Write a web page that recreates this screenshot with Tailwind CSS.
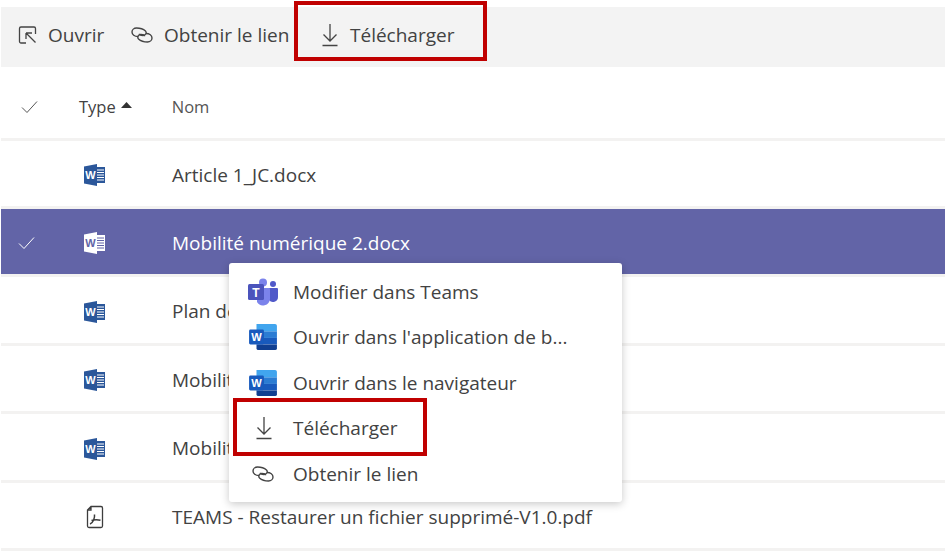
<!DOCTYPE html>
<html lang="fr">
<head>
  <meta charset="UTF-8">
  <title>Fichiers</title>
  <script src="https://cdn.jsdelivr.net/npm/@tailwindcss/browser@4"></script>
</head>
<body class="bg-white">
  <svg class="hidden">
    <symbol id="word" viewBox="0 0 22 22">
      <path d="M12 3h9v16h-9z" fill="#2b579a"/>
      <path d="M13 6h7M13 8.500h7M13 11h7M13 13.500h7M13 16h7" stroke="#fff" stroke-width="1"/>
      <path d="M0 2.500 13 0v22L0 19.500z" fill="#2b579a"/>
      <text x="6.500" y="15" text-anchor="middle" font-family="Liberation Sans" font-weight="700" font-size="11" fill="#fff">W</text>
    </symbol>
    <symbol id="wordsel" viewBox="0 0 22 22">
      <path d="M12 3h9v16h-9z" fill="#fff"/>
      <path d="M13 6h7M13 8.500h7M13 11h7M13 13.500h7M13 16h7" stroke="#6264a7" stroke-width="1"/>
      <path d="M0 2.500 13 0v22L0 19.500z" fill="#fff"/>
      <text x="6.500" y="15" text-anchor="middle" font-family="Liberation Sans" font-weight="700" font-size="11" fill="#6264a7">W</text>
    </symbol>
    <symbol id="dl" viewBox="0 0 20 24">
      <path d="M10 1v17M3.500 11.500l6.500 6.500 6.500-6.500M2.500 22.500h15" fill="none" stroke="#444" stroke-width="1.300"/>
    </symbol>
    <symbol id="lien" viewBox="0 0 22 16">
      <path d="M7 9.500C3.500 9.500 1 7.500 1 5 1 2.800 3 1 5.500 1 9 1 12.500 2.200 14.500 4 16 5.500 15 8.500 12 8.500 10 8.500 8.500 7.800 8.500 6.800" fill="none" stroke="#444" stroke-width="1.400"/>
      <path d="M15 6.500C18.500 6.500 21 8.500 21 11 21 13.200 19 15 16.500 15 13 15 9.500 13.800 7.500 12 6 10.500 7 7.500 10 7.500 12 7.500 13.500 8.200 13.500 9.200" fill="none" stroke="#444" stroke-width="1.400"/>
    </symbol>
    <symbol id="wordnew" viewBox="0 0 30 28">
      <path d="M8 0h20a2 2 0 0 1 2 2v6H8z" fill="#41a5ee"/>
      <path d="M8 8h22v7H8z" fill="#2b7cd3"/>
      <path d="M8 15h22v7H8z" fill="#185abd"/>
      <path d="M8 22h22v4a2 2 0 0 1-2 2H10a2 2 0 0 1-2-2z" fill="#103f91"/>
      <rect x="0" y="6" width="16" height="16" rx="1.500" fill="#185abd"/>
      <text x="8" y="18.500" text-anchor="middle" font-family="Liberation Sans" font-weight="700" font-size="12" fill="#fff">W</text>
    </symbol>
  </svg>

  <div class="relative w-[945px] h-[552px] overflow-hidden font-['Open_Sans','Noto_Sans',sans-serif] text-[#424242]">
    <div class="h-[7px]"></div>

    <!-- barre d'outils -->
    <div class="ml-px h-[60px] bg-[#f3f3f3] flex items-center text-[19px] pl-[17px] pb-[4px]">
      <svg class="w-[20px] h-[20px] mr-[10px]" viewBox="0 0 20 20" fill="none" stroke="#444" stroke-width="1.300">
        <path d="M8 18H3a1.500 1.500 0 0 1-1.500-1.500v-13A1.500 1.500 0 0 1 3 2h13a1.500 1.500 0 0 1 1.500 1.500V9M8 8l9.500 9.500M8 8v6M8 8h6"/>
      </svg>
      <span class="w-[83px]">Ouvrir</span>
      <svg class="w-[22px] h-[16px] mr-[11px]"><use href="#lien"/></svg>
      <span class="w-[156px]">Obtenir le lien</span>
      <svg class="w-[20px] h-[24px] mr-[10px]"><use href="#dl"/></svg>
      <span>Télécharger</span>
    </div>

    <!-- en-tete -->
    <div class="ml-px h-[74px] flex items-center border-b-[3px] border-[#f3f2f1] text-[16.500px] pt-[9px]">
      <svg class="ml-[20px] w-[17px] h-[14px]" viewBox="0 0 17 14" fill="none" stroke="#555" stroke-width="1">
        <path d="M1 7.500 6 12.500 16 1.500"/>
      </svg>
      <span class="ml-[41px]">Type</span>
      <svg class="ml-[5px] mb-[5px] w-[11px] h-[6px]" viewBox="0 0 11 6"><path d="M5.500 0 11 6H0z" fill="#333"/></svg>
      <span class="ml-[40px] text-[#555]">Nom</span>
    </div>

    <!-- lignes -->
    <div class="ml-px h-[68px] flex items-center border-b-[3px] border-[#f3f2f1] text-[19px] pt-[3px]">
      <svg class="ml-[83px] w-[22px] h-[22px]"><use href="#word"/></svg>
      <span class="ml-[66px]">Article 1_JC.docx</span>
    </div>
    <div class="ml-px h-[68px] flex items-center bg-[#6264a7] border-b-[3px] border-[#f3f2f1] text-white text-[19px] pt-[3px]">
      <svg class="ml-[17px] w-[17px] h-[14px]" viewBox="0 0 17 14" fill="none" stroke="#fff" stroke-width="1">
        <path d="M1 7.500 6 12.500 16 1.500"/>
      </svg>
      <svg class="ml-[49px] w-[22px] h-[22px]"><use href="#wordsel"/></svg>
      <span class="ml-[66px]">Mobilité numérique 2.docx</span>
    </div>
    <div class="ml-px h-[69px] flex items-center border-b-[3px] border-[#f3f2f1] text-[19px] pt-[3px]">
      <svg class="ml-[83px] w-[22px] h-[22px]"><use href="#word"/></svg>
      <span class="ml-[66px]">Plan de</span>
    </div>
    <div class="ml-px h-[68px] flex items-center border-b-[3px] border-[#f3f2f1] text-[19px] pt-[3px]">
      <svg class="ml-[83px] w-[22px] h-[22px]"><use href="#word"/></svg>
      <span class="ml-[66px]">Mobilité</span>
    </div>
    <div class="ml-px h-[69px] flex items-center border-b-[3px] border-[#f3f2f1] text-[19px] pt-[3px]">
      <svg class="ml-[83px] w-[22px] h-[22px]"><use href="#word"/></svg>
      <span class="ml-[66px]">Mobilité</span>
    </div>
    <div class="ml-px h-[68px] flex items-center border-b-[3px] border-[#f3f2f1] text-[19px] pt-[3px]">
      <svg class="ml-[83px] w-[22px] h-[24px]" viewBox="0 0 22 24" fill="none" stroke="#3d3d3d" stroke-width="1.300">
        <path d="M7 1.500h10a1.500 1.500 0 0 1 1.500 1.500v18a1.500 1.500 0 0 1-1.500 1.500H5A1.500 1.500 0 0 1 3.500 21V5zM7 1.500V5H3.500"/>
        <path d="M6 19c3-1 5-6 4.500-9.500M7.500 15.500c3-1 6-1 9-.2" stroke-width="1.500"/>
      </svg>
      <span class="ml-[66px]">TEAMS - Restaurer un fichier supprimé-V1.0.pdf</span>
    </div>

    <!-- menu contextuel -->
    <div class="absolute left-[229px] top-[263px] w-[393px] h-[239px] bg-white rounded-[3px] shadow-[0_2px_9px_rgba(0,0,0,0.22)] pt-[6px] text-[19px]">
      <div class="h-[45.500px] flex items-center pl-[19px]">
        <svg class="w-[30px] h-[28px] mr-[15px]" viewBox="0 0 30 28">
          <circle cx="15" cy="4.500" r="4" fill="#7b83eb"/>
          <circle cx="25" cy="6" r="3" fill="#5059c9"/>
          <path d="M21 10h8a1 1 0 0 1 1 1v8a5 5 0 0 1-9 3z" fill="#5059c9"/>
          <path d="M9 10h12a1 1 0 0 1 1 1v10a7 7 0 0 1-13 3z" fill="#7b83eb"/>
          <rect x="0" y="6" width="16" height="16" rx="1.500" fill="#4b53bc"/>
          <text x="8" y="18.500" text-anchor="middle" font-family="Liberation Sans" font-weight="700" font-size="12" fill="#fff">T</text>
        </svg>
        <span>Modifier dans Teams</span>
      </div>
      <div class="h-[45.500px] flex items-center pl-[19px]">
        <svg class="w-[30px] h-[26px] mr-[15px]"><use href="#wordnew"/></svg>
        <span>Ouvrir dans l'application de b...</span>
      </div>
      <div class="h-[45.500px] flex items-center pl-[19px]">
        <svg class="w-[30px] h-[26px] mr-[15px]"><use href="#wordnew"/></svg>
        <span>Ouvrir dans le navigateur</span>
      </div>
      <div class="h-[45.500px] flex items-center pl-[25px]">
        <svg class="w-[20px] h-[24px] mr-[19px]"><use href="#dl"/></svg>
        <span>Télécharger</span>
      </div>
      <div class="h-[45.500px] flex items-center pl-[23px]">
        <svg class="w-[22px] h-[16px] mr-[19px]"><use href="#lien"/></svg>
        <span>Obtenir le lien</span>
      </div>
    </div>

    <!-- encadres rouges -->
    <div class="absolute left-[294px] top-[1px] w-[193px] h-[60px] border-[4px] border-[#c00000]"></div>
    <div class="absolute left-[233px] top-[398px] w-[194px] h-[58px] border-[4px] border-[#c00000]"></div>
  </div>
</body>
</html>
